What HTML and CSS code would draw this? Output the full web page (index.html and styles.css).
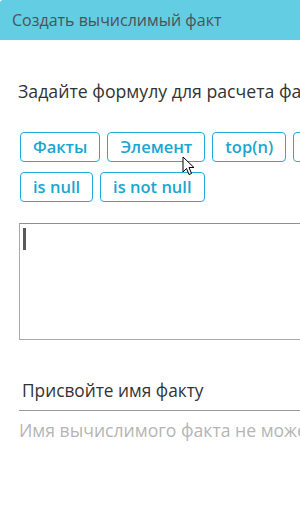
FILE: index.html
```html
<!DOCTYPE html>
<html lang="ru">
<head>
<meta charset="utf-8">
<link rel="stylesheet" href="styles.css">
</head>
<body>
<div class="dialog">
  <div class="header">Создать вычислимый факт</div>
  <div class="body">
    <div class="label">Задайте формулу для расчета факта</div>
    <div class="buttons">
      <button class="btn">Факты</button>
      <button class="btn">Элемент</button>
      <button class="btn">top(n)</button>
      <button class="btn">bottom(n)</button>
      <button class="btn">is null</button>
      <button class="btn">is not null</button>
    </div>
    <div class="formula"><span class="caret"></span></div>
    <div class="name-label">Присвойте имя факту</div>
    <div class="name-input">Имя вычислимого факта не может быть пустым</div>
  </div>
</div>
<svg class="cursor" width="13" height="21" viewBox="0 0 13 21">
  <path d="M1 1 L1 16 L4.5 12.5 L7 18.5 L9.5 17.5 L7 11.5 L12 11.5 Z" fill="#fff" stroke="#000" stroke-width="1" stroke-linejoin="round"/>
</svg>
</body>
</html>
```
FILE: styles.css
```css
html, body {
  margin: 0;
  padding: 0;
  overflow: hidden;
  background: #fff;
}
body {
  font-family: "Open Sans", "Noto Sans", sans-serif;
  width: 300px;
  height: 526px;
  position: relative;
}
.dialog {
  width: 620px;
}
.header {
  height: 40px;
  background: #63cde4;
  color: #4d5257;
  font-size: 16px;
  line-height: 40px;
  padding-left: 12px;
  border-radius: 3px 3px 0 0;
}
.body {
  padding: 39px 0 0 19px;
}
.label {
  font-size: 17.7px;
  color: #333;
  line-height: 24px;
  margin-left: -1px;
}
.buttons {
  display: flex;
  flex-wrap: wrap;
  width: 420px;
  column-gap: 7px;
  row-gap: 10px;
  margin-top: 29px;
  padding-left: 1px;
}
.btn {
  font-family: "Open Sans", "Noto Sans", sans-serif;
  font-weight: 600;
  font-size: 16.5px;
  color: #1ba6d0;
  background: #fff;
  border: 1px solid #22aed8;
  border-radius: 4px;
  height: 30px;
  padding: 0 12px;
  margin: 0;
  line-height: 28px;
}
.formula {
  margin-top: 21px;
  height: 111px;
  border: 1px solid #a9a9a9;
  border-top-color: #8f8f8f;
  padding: 4px 3px 0;
}
.caret {
  display: block;
  width: 3px;
  height: 22px;
  background: #5a5a5a;
}
.name-label {
  margin-top: 40px;
  font-size: 17.3px;
  color: #333;
  padding-left: 3px;
  line-height: 22px;
  padding-bottom: 8px;
  border-bottom: 1px solid #999;
}
.name-input {
  font-size: 17.6px;
  color: #b5b5b5;
  line-height: 22px;
  margin-top: 8px;
}
.cursor {
  position: absolute;
  left: 182px;
  top: 156px;
}
```
